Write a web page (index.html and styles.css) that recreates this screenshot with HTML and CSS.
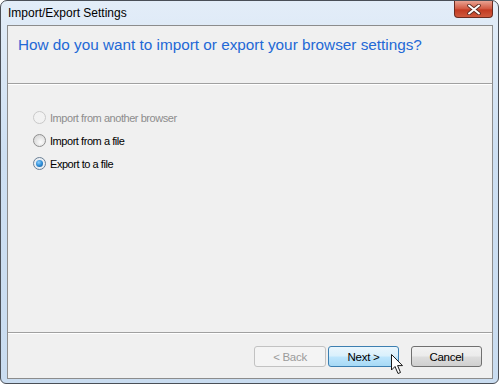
FILE: index.html
```html
<!DOCTYPE html>
<html>
<head>
<meta charset="utf-8">
<link rel="stylesheet" href="styles.css">
</head>
<body>
<div class="window">
  <div class="titlebar">
    <span class="title">Import/Export Settings</span>
    <div class="close">
      <svg width="14" height="11" viewBox="0 0 14 11"><path d="M2 1.5 L12 9.5 M12 1.5 L2 9.5" stroke="#5a2a20" stroke-width="3.6" stroke-linecap="round"/><path d="M2 1.5 L12 9.5 M12 1.5 L2 9.5" stroke="#ffffff" stroke-width="2" stroke-linecap="round"/></svg>
    </div>
  </div>
  <div class="content">
    <div class="header">
      <h1 class="heading">How do you want to import or export your browser settings?</h1>
    </div>
    <div class="body">
      <label class="option disabled"><span class="radio"></span>Import from another browser</label>
      <label class="option"><span class="radio"></span>Import from a file</label>
      <label class="option"><span class="radio checked"><span class="dot"></span></span>Export to a file</label>
    </div>
    <div class="footer">
      <button class="btn back">&lt; Back</button>
      <button class="btn next">Next &gt;</button>
      <button class="btn cancel">Cancel</button>
    </div>
  </div>
  <svg class="cursor" width="14" height="22" viewBox="0 0 14 22"><path d="M1.5 1.5 L1.5 17 L5 13.5 L8 20.5 L10.5 19.5 L7.6 12.6 L12.5 12.6 Z" fill="#ffffff" stroke="#1a1a1a" stroke-width="1" stroke-linejoin="round"/></svg>
</div>
</body>
</html>
```
FILE: styles.css
```css
* { box-sizing: border-box; }
html, body { margin: 0; padding: 0; background: #ffffff; }
body { font-family: "Liberation Sans", Arial, sans-serif; font-size: 12px; color: #000; }

.window {
  position: relative;
  width: 499px;
  height: 384px;
  border: 1px solid #4a4f57;
  border-radius: 7px 7px 6px 6px;
  background: linear-gradient(#e3edf8, #cddff2 40%, #c9dcf0);
  padding: 0 5px 4px 6px;
  display: flex;
  flex-direction: column;
}

.titlebar {
  height: 24px;
  display: flex;
  align-items: flex-start;
  justify-content: space-between;
}
.title {
  padding: 5px 0 0 1px;
  font-size: 12px;
  color: #000;
}
.close {
  width: 39px;
  height: 17px;
  border: 1px solid #6b2b20;
  border-top: none;
  border-radius: 0 0 4px 4px;
  background: linear-gradient(#e9a392, #d1573f 50%, #c23a22 55%, #cf5a3e);
  display: flex;
  align-items: center;
  justify-content: center;
}

.content {
  flex: 1;
  border: 1px solid #8c8c8c;
  background: #f0f0f0;
  display: flex;
  flex-direction: column;
}

.header {
  height: 58px;
  border-bottom: 1px solid #a0a0a0;
  box-shadow: 0 1px 0 #ffffff;
  padding: 10px 0 0 10px;
}
.heading {
  margin: 0;
  font-weight: normal;
  font-size: 15.3px;
  color: #2368d6;
}

.body {
  flex: 1;
  padding: 27px 0 0 25px;
  display: flex;
  flex-direction: column;
  gap: 10px;
}
.option {
  display: flex;
  align-items: center;
  gap: 4px;
  height: 13px;
  font-size: 11px;
  letter-spacing: -0.45px;
  color: #000;
}
.option.disabled { color: #8d8d8d; }
.radio {
  width: 13px;
  height: 13px;
  border-radius: 50%;
  border: 1px solid #8f8f8f;
  background: radial-gradient(circle at 60% 65%, #fdfdfd 0, #e6e6e6 45%, #cfcfcf 100%);
  display: flex;
  align-items: center;
  justify-content: center;
}
.disabled .radio { border-color: #c9c9c9; background: #f2f2f2; }
.radio.checked { border-color: #6a7f95; background: #e9eef3; }
.dot {
  width: 7px;
  height: 7px;
  border-radius: 50%;
  background: radial-gradient(circle at 40% 35%, #8fd0ff 0, #2f8fd8 50%, #10508e 100%);
}

.footer {
  height: 46px;
  border-top: 1px solid #a0a0a0;
  box-shadow: inset 0 1px 0 #ffffff;
  display: flex;
  justify-content: flex-end;
  align-items: flex-start;
  padding: 13px 10px 0 0;
}
.btn {
  height: 21px;
  width: 71px;
  border-radius: 3px;
  font-family: "Liberation Sans", Arial, sans-serif;
  font-size: 11.5px;
  letter-spacing: -0.3px;
  padding: 0;
  border: 1px solid #707070;
  background: linear-gradient(#f2f2f2, #ebebeb 48%, #dddddd 52%, #cfcfcf);
  color: #000;
}
.btn.back {
  width: 72px;
  margin-right: 2px;
  border-color: #c2c2c2;
  background: #f4f4f4;
  color: #9b9b9b;
}
.btn.next {
  margin-right: 12px;
  border-color: #3c7fb1;
  background: linear-gradient(#eaf6fd, #d9f0fc 48%, #bee6fd 52%, #a7d9f5);
}

.cursor {
  position: absolute;
  left: 389px;
  top: 352px;
}
```
